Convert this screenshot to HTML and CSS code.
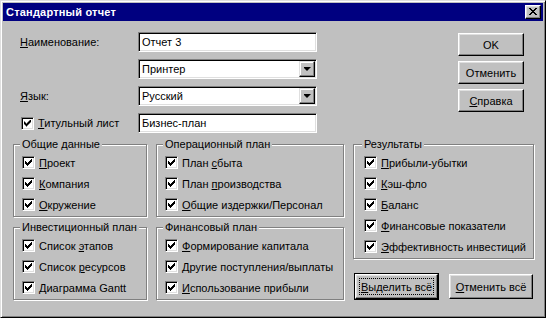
FILE: index.html
```html
<!DOCTYPE html>
<html lang="ru">
<head>
<meta charset="utf-8">
<title>Стандартный отчет</title>
<link rel="stylesheet" href="styles.css">
</head>
<body>
<div class="window">
  <div class="titlebar">
    <span class="title">Стандартный отчет</span>
    <span class="close"><svg width="8" height="7" viewBox="0 0 8 7" shape-rendering="crispEdges"><path fill="#000" d="M0 0h2v1H0z M6 0h2v1H6z M1 1h2v1H1z M5 1h2v1H5z M2 2h4v1H2z M3 3h2v1H3z M2 4h4v1H2z M1 5h2v1H1z M5 5h2v1H5z M0 6h2v1H0z M6 6h2v1H6z"/></svg></span>
  </div>
  <div class="content">
    <div class="top">
      <div class="form">
        <span class="lbl"><u>Н</u>аименование:</span>
        <div class="field">Отчет 3</div>
        <span></span>
        <div class="field combo"><span>Принтер</span><span class="drop"><span class="tri"></span></span></div>
        <span class="lbl"><u>Я</u>зык:</span>
        <div class="field combo"><span>Русский</span><span class="drop"><span class="tri"></span></span></div>
        <span class="lbl cbrow first"><span class="cb"></span><span><u>Т</u>итульный лист</span></span>
        <div class="field">Бизнес-план</div>
      </div>
      <div class="buttons">
        <button class="btn">OK</button>
        <button class="btn">Отменить</button>
        <button class="btn"><u>С</u>правка</button>
      </div>
    </div>
    <div class="groups">
      <div class="col col1">
        <div class="group">
          <div class="gtitle">Общие данные</div>
          <div class="cbrow"><span class="cb"></span><span><u>П</u>роект</span></div>
          <div class="cbrow"><span class="cb"></span><span><u>К</u>омпания</span></div>
          <div class="cbrow"><span class="cb"></span><span><u>О</u>кружение</span></div>
        </div>
        <div class="group">
          <div class="gtitle">Инвестиционный план</div>
          <div class="cbrow"><span class="cb"></span><span>Список <u>э</u>тапов</span></div>
          <div class="cbrow"><span class="cb"></span><span>Список <u>р</u>есурсов</span></div>
          <div class="cbrow"><span class="cb"></span><span><u>Д</u>иаграмма Gantt</span></div>
        </div>
      </div>
      <div class="col col2">
        <div class="group">
          <div class="gtitle">Операционный план</div>
          <div class="cbrow"><span class="cb"></span><span>План <u>с</u>быта</span></div>
          <div class="cbrow"><span class="cb"></span><span>План <u>п</u>роизводства</span></div>
          <div class="cbrow"><span class="cb"></span><span><u>О</u>бщие издержки/Персонал</span></div>
        </div>
        <div class="group">
          <div class="gtitle">Финансовый план</div>
          <div class="cbrow"><span class="cb"></span><span><u>Ф</u>ормирование капитала</span></div>
          <div class="cbrow"><span class="cb"></span><span><u>Д</u>ругие поступления/выплаты</span></div>
          <div class="cbrow"><span class="cb"></span><span><u>И</u>спользование прибыли</span></div>
        </div>
      </div>
      <div class="col col3">
        <div class="group results">
          <div class="gtitle">Результаты</div>
          <div class="cbrow"><span class="cb"></span><span><u>П</u>рибыли-убытки</span></div>
          <div class="cbrow"><span class="cb"></span><span><u>К</u>эш-фло</span></div>
          <div class="cbrow"><span class="cb"></span><span><u>Б</u>аланс</span></div>
          <div class="cbrow"><span class="cb"></span><span><u>Ф</u>инансовые показатели</span></div>
          <div class="cbrow"><span class="cb"></span><span><u>Э</u>ффективность инвестиций</span></div>
        </div>
        <div class="actions">
          <button class="btn wide default"><span class="focus"><u>В</u>ыделить всё</span></button>
          <button class="btn wide"><u>О</u>тменить всё</button>
        </div>
      </div>
    </div>
  </div>
</div>
</body>
</html>
```

FILE: styles.css
```css
* { box-sizing: border-box; }

html, body {
  margin: 0;
  padding: 0;
  background: #c0c0c0;
}

body {
  font-family: "Liberation Sans", Arial, sans-serif;
  font-size: 11px;
  color: #000;
}

u {
  text-decoration: underline;
  text-underline-offset: 1px;
}

.window {
  width: 546px;
  height: 318px;
  background: #c0c0c0;
  border: 1px solid;
  border-color: #dfdfdf #000 #000 #dfdfdf;
  box-shadow: inset 1px 1px #fff, inset -1px -1px #808080;
  padding: 2px;
  display: flex;
  flex-direction: column;
}

.titlebar {
  height: 18px;
  flex: none;
  background: #000080;
  color: #fff;
  display: flex;
  align-items: center;
  padding: 0 2px 0 3px;
}

.title {
  flex: 1;
  font-weight: bold;
  font-size: 11px;
  letter-spacing: 0.2px;
}

.close {
  width: 16px;
  height: 14px;
  background: #c0c0c0;
  border: 1px solid;
  border-color: #fff #000 #000 #fff;
  box-shadow: inset -1px -1px #808080, inset 1px 1px #dfdfdf;
  display: flex;
  align-items: center;
  justify-content: center;
  padding: 0 1px 1px 0;
}

.close svg { display: block; }

.content {
  padding-top: 11px;
}

.top {
  display: flex;
}

.form {
  display: grid;
  grid-template-columns: 118px 179px;
  grid-auto-rows: 20px;
  row-gap: 7px;
  margin-left: 17px;
  align-items: center;
}

.lbl {
  white-space: nowrap;
}

.field {
  height: 20px;
  background: #fff;
  border: 1px solid;
  border-color: #808080 #fff #fff #808080;
  box-shadow: inset 1px 1px #000, inset -1px -1px #dfdfdf;
  padding: 0 1px 0 3px;
  display: flex;
  align-items: center;
}

.drop {
  margin-left: auto;
  width: 16px;
  height: 16px;
  background: #c0c0c0;
  border: 1px solid;
  border-color: #dfdfdf #000 #000 #dfdfdf;
  box-shadow: inset -1px -1px #808080, inset 1px 1px #fff;
  display: flex;
  align-items: center;
  justify-content: center;
}

.tri {
  width: 7px;
  height: 4px;
  background: #000;
  clip-path: polygon(0 0, 7px 0, 7px 1px, 6px 1px, 6px 2px, 5px 2px, 5px 3px, 4px 3px, 4px 4px, 3px 4px, 3px 3px, 2px 3px, 2px 2px, 1px 2px, 1px 1px, 0 1px);
}

.buttons {
  margin-left: auto;
  margin-right: 19px;
  margin-top: 1px;
  display: flex;
  flex-direction: column;
  gap: 5px;
}

.btn {
  font: inherit;
  color: #000;
  width: 66px;
  height: 23px;
  padding: 0;
  background: #c0c0c0;
  border: 1px solid;
  border-color: #fff #000 #000 #fff;
  box-shadow: inset -1px -1px #808080, inset 1px 1px #dfdfdf;
  white-space: nowrap;
}

.btn.wide {
  width: 84px;
  height: 25px;
}

.btn.default {
  outline: 1px solid #000;
  padding: 3px;
}

.focus {
  display: flex;
  align-items: center;
  justify-content: center;
  height: 100%;
  border: 1px dotted #000;
}

.groups {
  display: flex;
  gap: 9px;
  padding-left: 10px;
  margin-top: 11px;
}

.col {
  display: flex;
  flex-direction: column;
  gap: 10px;
}

.col1 { width: 134px; }
.col2 { width: 188px; }
.col3 { width: 181px; gap: 15px; }

.group {
  border: 1px solid #808080;
  box-shadow: inset 1px 1px #fff, 1px 1px #fff;
  padding: 0 0 1px 8px;
}

.group.results {
  padding-left: 10px;
}

.gtitle {
  width: max-content;
  height: 13px;
  line-height: 13px;
  margin: -7px 0 1px -2px;
  padding: 0 2px;
  background: #c0c0c0;
  white-space: nowrap;
}

.cbrow {
  height: 21px;
  display: flex;
  align-items: center;
  gap: 4px;
  white-space: nowrap;
}

.cbrow.first {
  height: 20px;
  padding-left: 1px;
}

.cb {
  flex: none;
  width: 13px;
  height: 13px;
  background: #fff;
  border: 1px solid;
  border-color: #808080 #fff #fff #808080;
  box-shadow: inset 1px 1px #000, inset -1px -1px #dfdfdf;
  display: flex;
  align-items: center;
  justify-content: center;
}

.cb::after {
  content: "";
  width: 7px;
  height: 7px;
  background: #000;
  clip-path: polygon(6px 0, 7px 0, 7px 3px, 6px 3px, 6px 4px, 5px 4px, 5px 5px, 4px 5px, 4px 6px, 3px 6px, 3px 7px, 2px 7px, 2px 6px, 1px 6px, 1px 5px, 0 5px, 0 2px, 1px 2px, 1px 3px, 2px 3px, 2px 4px, 3px 4px, 3px 3px, 4px 3px, 4px 2px, 5px 2px, 5px 1px, 6px 1px);
}

.actions {
  display: flex;
  gap: 11px;
  padding-left: 2px;
}

.actions .default { width: 83px; }
```
